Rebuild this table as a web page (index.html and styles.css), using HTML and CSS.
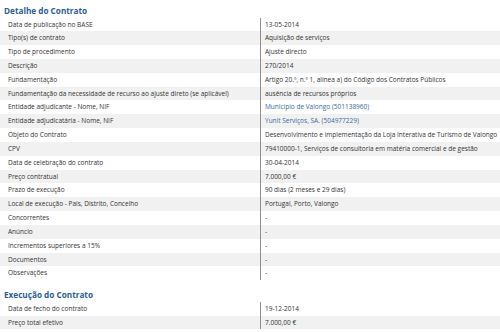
FILE: index.html
```html
<!DOCTYPE html>
<html lang="pt">
<head>
<meta charset="utf-8">
<link rel="stylesheet" href="styles.css">
</head>
<body>
<section class="section">
  <h2 class="section-title">Detalhe do Contrato</h2>
  <div class="table">
    <div class="row"><div class="label">Data de publicação no BASE</div><div class="value">13-05-2014</div></div>
    <div class="row"><div class="label">Tipo(s) de contrato</div><div class="value">Aquisição de serviços</div></div>
    <div class="row"><div class="label">Tipo de procedimento</div><div class="value">Ajuste directo</div></div>
    <div class="row"><div class="label">Descrição</div><div class="value">270/2014</div></div>
    <div class="row"><div class="label">Fundamentação</div><div class="value">Artigo 20.º, n.º 1, alínea a) do Código dos Contratos Públicos</div></div>
    <div class="row"><div class="label">Fundamentação da necessidade de recurso ao ajuste direto (se aplicável)</div><div class="value">ausência de recursos próprios</div></div>
    <div class="row"><div class="label">Entidade adjudicante - Nome, NIF</div><div class="value"><a class="link" href="#">Município de Valongo (501138960)</a></div></div>
    <div class="row"><div class="label">Entidade adjudicatária - Nome, NIF</div><div class="value"><a class="link" href="#">Yunit Serviços, SA. (504977229)</a></div></div>
    <div class="row"><div class="label">Objeto do Contrato</div><div class="value">Desenvolvimento e implementação da Loja Interativa de Turismo de Valongo</div></div>
    <div class="row"><div class="label">CPV</div><div class="value">79410000-1, Serviços de consultoria em matéria comercial e de gestão</div></div>
    <div class="row"><div class="label">Data de celebração do contrato</div><div class="value">30-04-2014</div></div>
    <div class="row"><div class="label">Preço contratual</div><div class="value">7.000,00 €</div></div>
    <div class="row"><div class="label">Prazo de execução</div><div class="value">90 dias (2 meses e 29 dias)</div></div>
    <div class="row"><div class="label">Local de execução - País, Distrito, Concelho</div><div class="value">Portugal, Porto, Valongo</div></div>
    <div class="row"><div class="label">Concorrentes</div><div class="value">-</div></div>
    <div class="row"><div class="label">Anúncio</div><div class="value">-</div></div>
    <div class="row"><div class="label">Incrementos superiores a 15%</div><div class="value">-</div></div>
    <div class="row"><div class="label">Documentos</div><div class="value">-</div></div>
    <div class="row"><div class="label">Observações</div><div class="value">-</div></div>
  </div>
</section>
<section class="section section-next">
  <h2 class="section-title">Execução do Contrato</h2>
  <div class="table">
    <div class="row"><div class="label">Data de fecho do contrato</div><div class="value">19-12-2014</div></div>
    <div class="row"><div class="label">Preço total efetivo</div><div class="value">7.000,00 €</div></div>
  </div>
</section>
</body>
</html>
```

FILE: styles.css
```css
html, body {
  margin: 0;
  padding: 0;
  background: #ffffff;
}

body {
  font-family: "Open Sans", "DejaVu Sans", sans-serif;
  color: #333333;
  width: 500px;
  overflow: hidden;
}

.section-title {
  margin: 0;
  padding: 6px 0 2.5px 4px;
  font-size: 8.2px;
  line-height: 9px;
  font-weight: 700;
  color: #2a5e98;
}

.section-next {
  margin-top: 4px;
}

.table {
  display: flex;
  flex-direction: column;
}

.row {
  display: grid;
  grid-template-columns: 260px 1fr;
  height: 13.83px;
  font-size: 6.5px;
  line-height: 13.83px;
  white-space: nowrap;
}

.row:nth-child(even) {
  background: #f1f1f1;
}

.label {
  padding-left: 8px;
  overflow: hidden;
}

.value {
  border-left: 1px solid #8f8f8f;
  padding-left: 4px;
  overflow: hidden;
}

.link {
  color: #3b6ba3;
  text-decoration: none;
}
```
